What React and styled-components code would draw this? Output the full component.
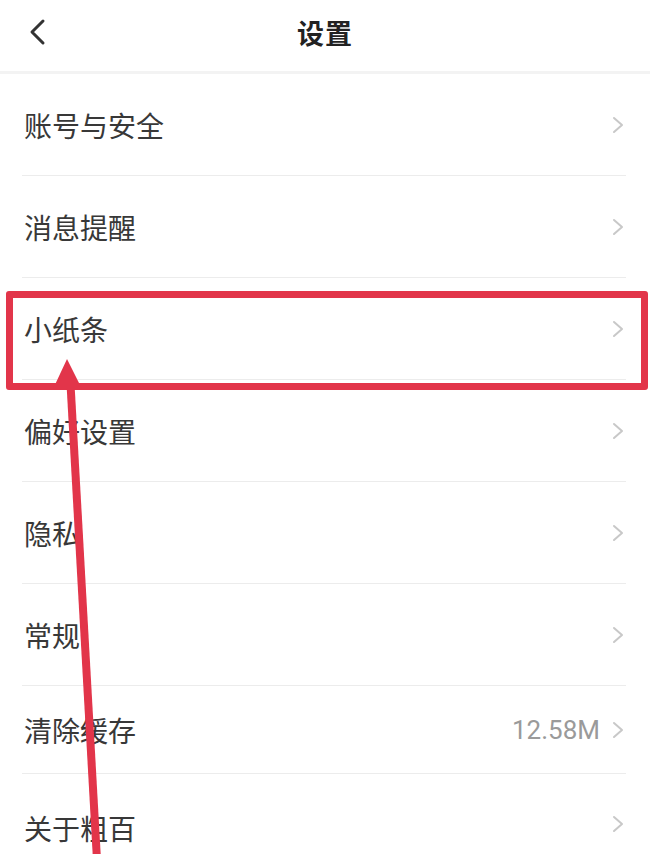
import styled, { createGlobalStyle } from "styled-components";

const GlobalStyle = createGlobalStyle`
  html, body {
    margin: 0;
    padding: 0;
    background: #ffffff;
  }
  body {
    font-family: "Noto Sans CJK SC", "Noto Sans", sans-serif;
  }
`;

const Page = styled.div`
  position: relative;
  width: 650px;
  height: 854px;
  overflow: hidden;
  background: #ffffff;
`;

const Header = styled.header`
  height: 71px;
  display: flex;
  align-items: center;
  justify-content: center;
  position: relative;
  border-bottom: 3px solid #f3f3f3;
`;

const BackButton = styled.button`
  position: absolute;
  left: 22px;
  top: 14px;
  width: 30px;
  height: 36px;
  padding: 0;
  border: none;
  background: none;
  display: flex;
  align-items: center;
  justify-content: center;
`;

const Title = styled.h1`
  margin: 0;
  margin-top: -6px;
  font-size: 27px;
  font-weight: 700;
  color: #222222;
  letter-spacing: 1px;
`;

const List = styled.ul`
  list-style: none;
  margin: 0;
  padding: 0;
`;

const Row = styled.li`
  height: ${(p) => p.$h}px;
  margin: 0 24px 0 22px;
  display: flex;
  align-items: center;
  justify-content: space-between;
  border-bottom: 1px solid #ececec;
  box-sizing: border-box;
`;

const Label = styled.span`
  padding-left: 2px;
  font-size: 28px;
  color: #383838;
  margin-top: ${(p) => p.$shift || 0}px;
`;

const Right = styled.div`
  display: flex;
  align-items: center;
  gap: 12px;
  padding-right: 2px;
`;

const Value = styled.span`
  font-family: Roboto, "Noto Sans", sans-serif;
  font-size: 26px;
  color: #9a9a9a;
`;

const Highlight = styled.div`
  position: absolute;
  left: 6px;
  top: 291px;
  width: 642px;
  height: 99px;
  box-sizing: border-box;
  border: 7px solid #e2354a;
  border-radius: 3px;
  pointer-events: none;
`;

const ArrowLayer = styled.svg`
  position: absolute;
  left: 0;
  top: 0;
  pointer-events: none;
`;

function Chevron() {
  return (
    <svg width="12" height="18" viewBox="0 0 12 18">
      <polyline
        points="2,2 10,9 2,16"
        fill="none"
        stroke="#c8c8c8"
        strokeWidth="2"
        strokeLinecap="round"
        strokeLinejoin="round"
      />
    </svg>
  );
}

const items = [
  { label: "账号与安全", h: 102 },
  { label: "消息提醒", h: 102 },
  { label: "小纸条", h: 102 },
  { label: "偏好设置", h: 102 },
  { label: "隐私", h: 102 },
  { label: "常规", h: 102 },
  { label: "清除缓存", h: 88, value: "12.58M" },
  { label: "关于粗百", h: 100, shift: 8 }
];

export default function App() {
  return (
    <Page>
      <GlobalStyle />
      <Header>
        <BackButton aria-label="返回">
          <svg width="20" height="28" viewBox="0 0 20 28">
            <polyline
              points="16,3 5,14 16,25"
              fill="none"
              stroke="#333333"
              strokeWidth="3"
              strokeLinecap="round"
              strokeLinejoin="round"
            />
          </svg>
        </BackButton>
        <Title>设置</Title>
      </Header>
      <List>
        {items.map((it) => (
          <Row key={it.label} $h={it.h}>
            <Label $shift={it.shift}>{it.label}</Label>
            <Right>
              {it.value && <Value>{it.value}</Value>}
              <Chevron />
            </Right>
          </Row>
        ))}
      </List>

      <Highlight />
      <ArrowLayer width="650" height="854" viewBox="0 0 650 854">
        <line
          x1="70"
          y1="375"
          x2="97"
          y2="860"
          stroke="#e2354a"
          strokeWidth="8"
        />
        <polygon points="67,359 53,389 82,389" fill="#e2354a" />
      </ArrowLayer>
    </Page>
  );
}
